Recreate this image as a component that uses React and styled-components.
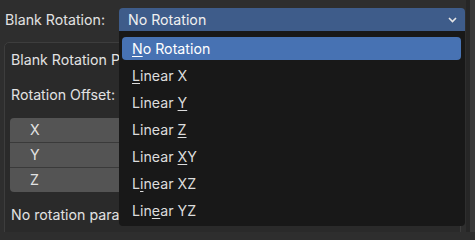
import React from 'react';
import styled, { createGlobalStyle } from 'styled-components';

const options = [
  { pre: '', key: 'N', post: 'o Rotation' },
  { pre: '', key: 'L', post: 'inear X' },
  { pre: 'Linear ', key: 'Y', post: '' },
  { pre: 'Linear ', key: 'Z', post: '' },
  { pre: 'Linear ', key: 'X', post: 'Y' },
  { pre: 'L', key: 'i', post: 'near XZ' },
  { pre: 'Lin', key: 'e', post: 'ar YZ' },
];

function App() {
  return (
    <Page>
      <GlobalStyle />
      <Main>
        <TopRow>
          <Label>Blank Rotation:</Label>
          <SelectWrap>
            <Select>
              <span>No Rotation</span>
              <svg width="9" height="6" viewBox="0 0 9 6">
                <polyline points="1,1 4.5,4.5 8,1" fill="none" stroke="#e6e6e6" strokeWidth="1.6" />
              </svg>
            </Select>
            <Menu>
              {options.map((o, i) => (
                <Item key={i} selected={i === 0}>
                  {o.pre}
                  <Key>{o.key}</Key>
                  {o.post}
                </Item>
              ))}
            </Menu>
          </SelectWrap>
        </TopRow>
        <Panel>
          <Text top={7}>Blank Rotation Parameters</Text>
          <Text top={15}>Rotation Offset:</Text>
          <Table>
            <Cell>X</Cell>
            <Cell>Y</Cell>
            <Cell last>Z</Cell>
          </Table>
          <Text top={13}>No rotation parameters for this mode</Text>
        </Panel>
      </Main>
      <Gutter />
      <Scroll />
    </Page>
  );
}

//////// style ////////

const GlobalStyle = createGlobalStyle`
  html, body {
    margin: 0;
    padding: 0;
    height: 100%;
    overflow: hidden;
    background: #2e2e2e;
  }
  body {
    font-family: Inter, "Noto Sans", sans-serif;
    font-size: 14.2px;
    color: #e2e2e2;
  }
`;

const Page = styled.div`
  display: flex;
  width: 475px;
  height: 232px;
  overflow: hidden;
`;

const Main = styled.div`
  width: 466px;
  padding-left: 4px;
  box-sizing: border-box;
`;

const Gutter = styled.div`
  width: 4px;
  background: #262626;
`;

const Scroll = styled.div`
  width: 5px;
  background: #3a3a3a;
`;

const TopRow = styled.div`
  display: flex;
  align-items: center;
  padding-top: 8px;
`;

const Label = styled.div`
  width: 114px;
  padding-left: 1px;
  line-height: 23px;
`;

const SelectWrap = styled.div`
  position: relative;
  width: 346px;
  z-index: 2;
`;

const Select = styled.div`
  height: 23px;
  background: #3e5c8a;
  border-radius: 4px 4px 0 0;
  display: flex;
  align-items: center;
  justify-content: space-between;
  padding: 0 8px 0 9px;
  color: #f0f0f0;

  svg {
    margin-top: 1px;
  }
`;

const Menu = styled.div`
  position: absolute;
  top: 100%;
  left: 0;
  width: 100%;
  box-sizing: border-box;
  background: #181818;
  border-radius: 0 0 4px 4px;
  padding: 6px 4px 4px 3px;
  display: flex;
  flex-direction: column;
  gap: 4px;
`;

const Item = styled.div`
  height: 23px;
  line-height: 23px;
  padding-left: 10px;
  border-radius: 4px;
  color: ${p => (p.selected ? '#ffffff' : '#dcdcdc')};
  background: ${p => (p.selected ? '#4772b3' : 'transparent')};
`;

const Key = styled.span`
  text-decoration: underline;
  text-underline-offset: 2px;
  text-decoration-thickness: 1px;
`;

const Panel = styled.div`
  margin-top: 11px;
  width: 457px;
  height: 200px;
  box-sizing: border-box;
  border: 1px solid #3d3d3d;
  border-radius: 5px;
  background: #2a2a2a;
  padding: 0 6px;
`;

const Text = styled.div`
  margin-top: ${p => p.top}px;
  line-height: 20px;
  white-space: nowrap;
`;

const Table = styled.div`
  margin: 13px -1px 0;
  border-radius: 4px;
  overflow: hidden;
  display: flex;
  flex-direction: column;
`;

const Cell = styled.div`
  height: 24px;
  line-height: 24px;
  background: #545454;
  padding-left: 20px;
  border-bottom: ${p => (p.last ? 'none' : '1px solid #3a3a3a')};
`;

export default App;
